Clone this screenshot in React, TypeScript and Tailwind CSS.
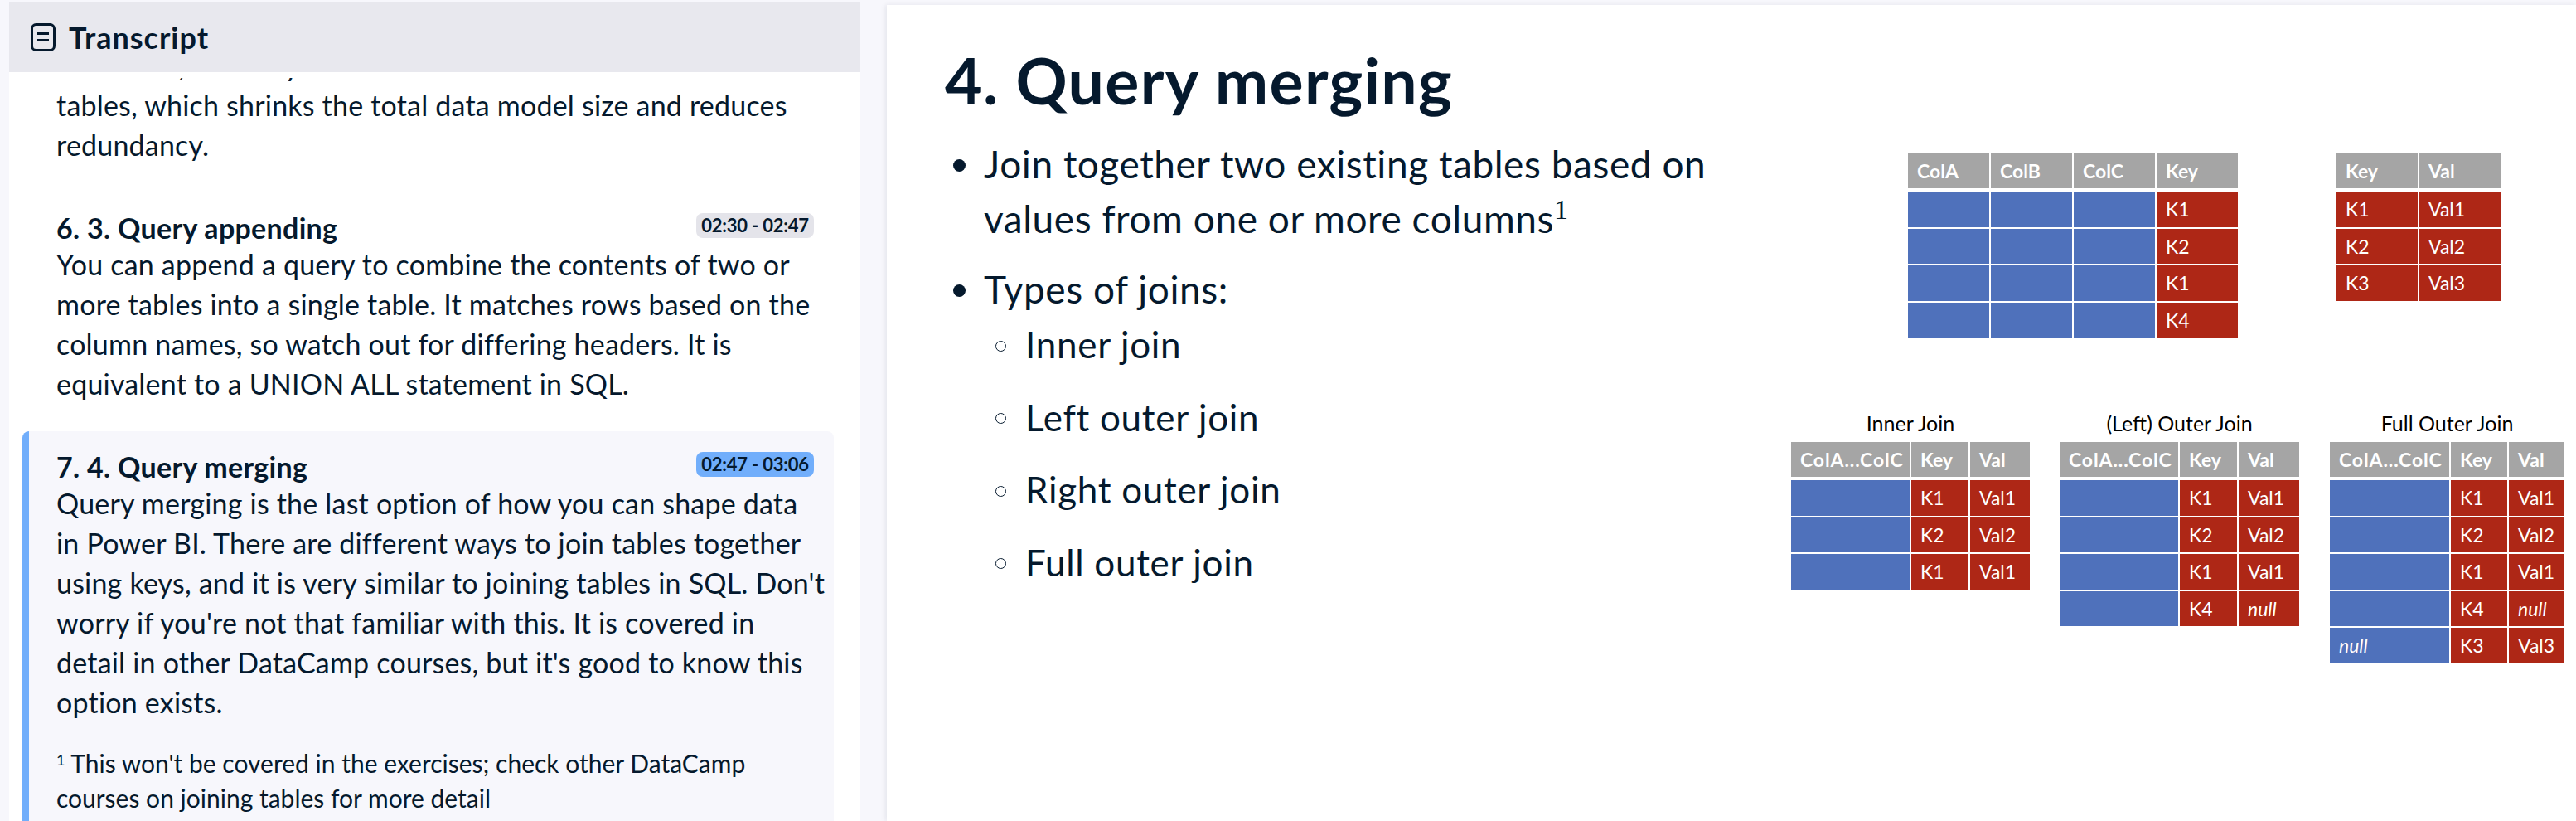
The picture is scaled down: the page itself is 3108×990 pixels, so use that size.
import type { ReactNode } from "react";

const sans = "font-['Lato','Liberation_Sans',sans-serif]";

function Chip({ children, active }: { children: ReactNode; active?: boolean }) {
  return (
    <span
      className={
        "mt-[3px] flex h-[30px] w-[142px] items-center justify-center rounded-lg text-[22px] leading-none font-bold tracking-[-0.2px] whitespace-nowrap " +
        (active ? "bg-[#71aefb]" : "bg-[#e4e4ea]")
      }
    >
      {children}
    </span>
  );
}

function Section({ title, time, active, children }: { title: string; time: string; active?: boolean; children: ReactNode }) {
  return (
    <div
      className={
        "mb-[7px] ml-[16px] w-[979px] rounded-lg border-l-[8px] pt-[22px] pr-6 pb-[26px] pl-[33px] " +
        (active ? "border-[#71aefb] bg-[#f7f7fc]" : "border-transparent")
      }
    >
      <div className="flex items-start justify-between">
        <h3 className="text-[34px] leading-[41px] font-bold tracking-[0.3px]">{title}</h3>
        <Chip active={active}>{time}</Chip>
      </div>
      {children}
    </div>
  );
}

function Transcript() {
  return (
    <div className="mt-[2px] ml-[11px] flex w-[1027px] flex-col bg-white">
      <div className="flex h-[85px] shrink-0 items-center bg-[#e8e8ee] pl-[26px]">
        <svg width="30" height="34" viewBox="0 0 30 34" fill="none" stroke="#05192d" strokeWidth="3">
          <rect x="1.5" y="1.5" width="27" height="31" rx="5" />
          <path d="M8 12.5h14M8 20.5h14" />
        </svg>
        <h2 className="ml-[16px] text-[36px] font-bold tracking-[1px]">Transcript</h2>
      </div>
      {/* scrolled list: the line above "tables," is cut off by this box */}
      <div className="mt-[7px] flex-1 overflow-hidden">
        <div className="mt-[-39px] mb-[8px] pr-6 pb-[25px] pl-[57px] text-[34px] leading-[48px] tracking-[0.2px] whitespace-nowrap">
          Trim rows, and only
          <br />
          tables, which shrinks the total data model size and reduces
          <br />
          redundancy.
        </div>
        <Section title="6. 3. Query appending" time="02:30 - 02:47">
          <p className="text-[34px] leading-[48px] tracking-[0.2px] whitespace-nowrap">
            You can append a query to combine the contents of two or
            <br />
            more tables into a single table. It matches rows based on the
            <br />
            column names, so watch out for differing headers. It is
            <br />
            equivalent to a UNION ALL statement in SQL.
          </p>
        </Section>
        <Section title="7. 4. Query merging" time="02:47 - 03:06" active>
          <p className="text-[34px] leading-[48px] tracking-[0.2px] whitespace-nowrap">
            Query merging is the last option of how you can shape data
            <br />
            in Power BI. There are different ways to join tables together
            <br />
            using keys, and it is very similar to joining tables in SQL. Don't
            <br />
            worry if you're not that familiar with this. It is covered in
            <br />
            detail in other DataCamp courses, but it's good to know this
            <br />
            option exists.
          </p>
          <p className="mt-[28px] text-[30px] leading-[42px] whitespace-nowrap">
            <sup className="text-[18px] leading-none">1</sup> This won't be covered in the exercises; check other DataCamp
            <br />
            courses on joining tables for more detail
          </p>
        </Section>
      </div>
    </div>
  );
}

type Cell = { text?: string; italic?: boolean; red?: boolean };

function Table({ cols, head, rows }: { cols: string; head: string[]; rows: Cell[][] }) {
  return (
    <div className="font-['Lato',sans-serif] text-[23px] text-white">
      <div className={"mb-[4px] grid h-[42px] gap-x-[2px] " + cols}>
        {head.map((h) => (
          <div key={h} className={"flex items-center bg-[#a5a5a5] pl-[11px] font-bold " + (h.length > 5 ? "tracking-[0.9px]" : "")}>
            {h}
          </div>
        ))}
      </div>
      <div className={"grid auto-rows-[42.5px] gap-[2px] " + cols}>
        {rows.flat().map((c, i) => (
          <div key={i} className={"flex items-center pl-[11px] " + (c.red ? "bg-[#ae2716] " : "bg-[#4f71bb] ") + (c.italic ? "italic" : "")}>
            {c.text}
          </div>
        ))}
      </div>
    </div>
  );
}

const k = (text: string, italic?: boolean): Cell => ({ text, red: true, italic });
const blue = (text?: string, italic?: boolean): Cell => ({ text, italic });

const wide = (key: string): Cell[] => [blue(), blue(), blue(), k(key)];
const joined = (key: string, val: string, nullVal?: boolean): Cell[] => [blue(), k(key), k(val, nullVal)];

function JoinTable({ title, cols, rows }: { title: string; cols: string; rows: Cell[][] }) {
  return (
    <div>
      <div className="mb-[8px] h-[30px] text-center font-['Lato',sans-serif] text-[25px] leading-[30px] font-normal text-black">{title}</div>
      <Table cols={cols} head={["ColA...ColC", "Key", "Val"]} rows={rows} />
    </div>
  );
}

function Diagram() {
  return (
    <div className="flex flex-col pt-[179px]">
      <div className="flex items-start pl-[141px]">
        <div className="w-[398px]">
          <Table
            cols="grid-cols-[98px_98px_98px_98px]"
            head={["ColA", "ColB", "ColC", "Key"]}
            rows={[wide("K1"), wide("K2"), wide("K1"), wide("K4")]}
          />
        </div>
        <div className="ml-[119px] w-[199px]">
          <Table cols="grid-cols-[98px_99px]" head={["Key", "Val"]} rows={[[k("K1"), k("Val1")], [k("K2"), k("Val2")], [k("K3"), k("Val3")]]} />
        </div>
      </div>
      <div className="mt-[88px] flex items-start">
        <JoinTable title="Inner Join" cols="grid-cols-[143px_69px_72px]" rows={[joined("K1", "Val1"), joined("K2", "Val2"), joined("K1", "Val1")]} />
        <div className="ml-[36px]">
          <JoinTable
            title="(Left) Outer Join"
            cols="grid-cols-[143px_69px_73px]"
            rows={[joined("K1", "Val1"), joined("K2", "Val2"), joined("K1", "Val1"), joined("K4", "null", true)]}
          />
        </div>
        <div className="ml-[37px]">
          <JoinTable
            title="Full Outer Join"
            cols="grid-cols-[144px_68px_67px]"
            rows={[
              joined("K1", "Val1"),
              joined("K2", "Val2"),
              joined("K1", "Val1"),
              joined("K4", "null", true),
              [blue("null", true), k("K3"), k("Val3")],
            ]}
          />
        </div>
      </div>
    </div>
  );
}

function SubItem({ children }: { children: ReactNode }) {
  return (
    <li className="mb-[21.5px] flex items-center text-[44px] tracking-[0.7px]">
      <span className="mt-[4px] mr-[23px] ml-[-36px] h-[13px] w-[13px] shrink-0 rounded-full border-[1.5px] border-[#05192d]" />
      {children}
    </li>
  );
}

function Slide() {
  return (
    <div className="mt-[6px] ml-[32px] flex flex-1 bg-white shadow-[-2px_0_6px_rgba(5,25,45,0.08)]">
      <div className="w-[1091px] pt-[46px] pl-[70px]">
        <h1 className="text-[77px] leading-[88px] font-bold tracking-[1.3px]">4. Query merging</h1>
        <ul className="mt-[25px] list-disc pl-[47px] text-[46px] leading-[66px] tracking-[0.55px] whitespace-nowrap">
          <li className="mb-[19px]">
            Join together two existing tables based on
            <br />
            values from one or more columns
            <sup className="font-['Liberation_Serif',serif] text-[34px] leading-none">1</sup>
          </li>
          <li>
            Types of joins:
            <ul className="list-none pl-[50px]">
              <SubItem>Inner join</SubItem>
              <SubItem>Left outer join</SubItem>
              <SubItem>Right outer join</SubItem>
              <SubItem>Full outer join</SubItem>
            </ul>
          </li>
        </ul>
      </div>
      <Diagram />
    </div>
  );
}

export default function App() {
  return (
    <div className={"flex h-[990px] w-[3108px] overflow-hidden bg-[#f7f7fc] text-[#05192d] " + sans}>
      <Transcript />
      <Slide />
    </div>
  );
}
